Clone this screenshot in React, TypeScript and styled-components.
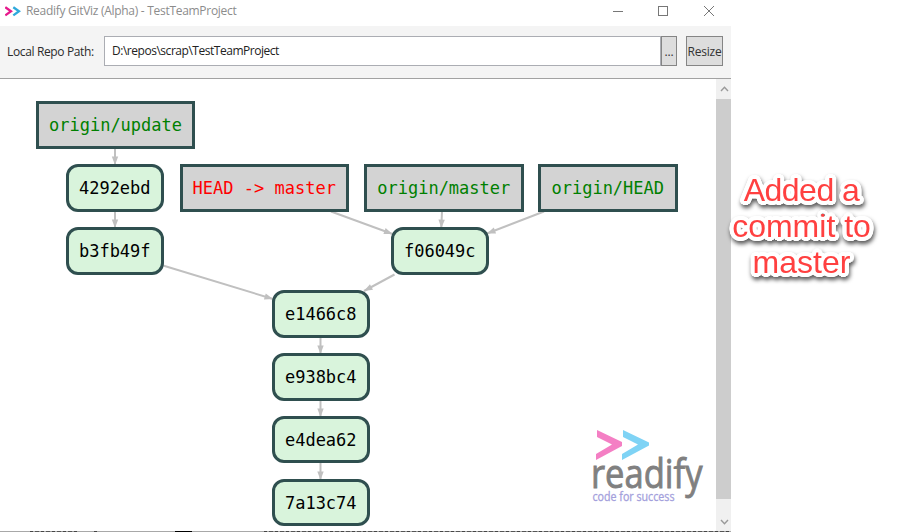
import React from "react";
import styled, { createGlobalStyle } from "styled-components";

const GlobalStyle = createGlobalStyle`
  *, *::before, *::after { box-sizing: border-box; }
  html, body { margin: 0; padding: 0; background: #fff; overflow: hidden; }
  body { font-family: "Open Sans", "Noto Sans", sans-serif; }
`;

const Page = styled.div`
  display: flex;
  width: 912px;
  height: 532px;
  overflow: hidden;
  background: #fff;
`;

const Window = styled.main`
  display: flex;
  flex-direction: column;
  width: 731px;
  flex: none;
`;

const TitleBar = styled.header`
  display: flex;
  align-items: center;
  height: 26px;
  flex: none;
  padding: 0 16px 4px 5px;
`;

const TitleText = styled.h1`
  margin: 0 auto 0 5px;
  font-size: 12px;
  line-height: 22px;
  font-weight: 400;
  letter-spacing: -0.29px;
  color: #8c8c8c;
  white-space: nowrap;
`;

const WindowControls = styled.div`
  display: flex;
  align-items: center;
  gap: 34px;
`;

const Toolbar = styled.div`
  display: flex;
  align-items: center;
  height: 53px;
  flex: none;
  padding: 0 8px 2px 7px;
  background: #f4f4f4;
  border-bottom: 1px solid #a2a2a2;
`;

const FieldLabel = styled.label`
  width: 97px;
  flex: none;
  font-size: 12px;
  letter-spacing: -0.36px;
  color: #2b2b2b;
  white-space: nowrap;
`;

const PathInput = styled.div`
  flex: 1;
  height: 30px;
  padding: 0 7px;
  border: 1px solid #abadb3;
  background: #fff;
  font-size: 12px;
  line-height: 27px;
  letter-spacing: -0.47px;
  color: #222;
  white-space: nowrap;
`;

const Button = styled.button<{ $width: number; $gap?: number }>`
  display: flex;
  align-items: center;
  justify-content: center;
  width: ${(p) => p.$width}px;
  height: 30px;
  flex: none;
  margin: 0 0 0 ${(p) => p.$gap ?? 0}px;
  padding: 0;
  border: 1px solid #858585;
  background: #dddddd;
  font-family: inherit;
  font-size: 12px;
  letter-spacing: -0.2px;
  color: #333;
`;

const Body = styled.div`
  display: flex;
  height: 452px;
  flex: none;
`;

const Canvas = styled.section`
  position: relative;
  width: 716px;
  flex: none;
  overflow: hidden;
  background: #fff;
`;

const Edges = styled.svg`
  position: absolute;
  inset: 0;
  display: block;
`;

const GraphNode = styled.div<{ $x: number; $y: number; $w: number }>`
  position: absolute;
  left: ${(p) => p.$x}px;
  top: ${(p) => p.$y}px;
  width: ${(p) => p.$w}px;
  height: 47.5px;
  display: flex;
  align-items: center;
  justify-content: center;
  padding-top: 1px;
  border: 3px solid #2f4f4f;
  font-family: "DejaVu Sans Mono", monospace;
  font-size: 17px;
  line-height: 20px;
  white-space: pre;
`;

const RefNode = styled(GraphNode)<{ $head?: boolean }>`
  background: #d3d3d3;
  color: ${(p) => (p.$head ? "#ff0000" : "#008000")};
`;

const CommitNode = styled(GraphNode)`
  background: #d9f4dc;
  border-radius: 12px;
  color: #000;
`;

const Brand = styled.svg`
  position: absolute;
  left: 590px;
  top: 347px;
  display: block;
  overflow: visible;
`;

const ScrollBar = styled.div`
  display: flex;
  flex-direction: column;
  width: 15px;
  background: #f0f0f0;
`;

const ScrollArrow = styled.div<{ $height: number }>`
  display: flex;
  align-items: center;
  justify-content: center;
  height: ${(p) => p.$height}px;
  padding-left: 2px;
`;

const ScrollThumb = styled.div`
  flex: 1;
  background: #cdcdcd;
`;

const Underlay = styled.div`
  display: flex;
  height: 1px;
  overflow: hidden;
  background: #a8a8a8;
`;

const UnderlayInk = styled.span<{ $start: number; $width: number; $solid?: boolean }>`
  flex: none;
  width: ${(p) => p.$width}px;
  height: 1px;
  margin-left: ${(p) => p.$start}px;
  background: ${(p) =>
    p.$solid ? "#000" : "repeating-linear-gradient(90deg, #444 0 3px, #aaa 3px 5px, #555 5px 9px, #999 9px 11px)"};
`;

const OUTLINE = Array.from({ length: 24 }, (_, i) => {
  const a = (i / 24) * Math.PI * 2;
  return `${(Math.cos(a) * 4).toFixed(2)}px ${(Math.sin(a) * 4).toFixed(2)}px 0 #fff`;
}).join(", ");

const Callout = styled.p`
  display: flex;
  flex-direction: column;
  align-items: center;
  width: 150px;
  height: 120px;
  flex: none;
  margin: 171.5px 0 0 -4.5px;
  font-family: "Liberation Sans", Arial, sans-serif;
  font-size: 32px;
  line-height: 36px;
  white-space: nowrap;
  color: #ff4040;
  text-shadow: ${OUTLINE};
  filter: drop-shadow(1px 3px 2px rgba(0, 0, 0, 0.65));
`;

const CalloutLine = styled.span<{ $tracking?: number }>`
  letter-spacing: ${(p) => p.$tracking ?? 0}px;
`;

type Point = [number, number];

const refs = [
  { label: "origin/update", x: 36, y: 101, w: 159 },
  { label: "HEAD -> master", x: 179.5, y: 164, w: 169.5, head: true },
  { label: "origin/master", x: 364, y: 164, w: 159.5 },
  { label: "origin/HEAD", x: 538, y: 164, w: 139.5 },
];

const commits = [
  { label: "4292ebd", x: 66, y: 164 },
  { label: "b3fb49f", x: 66, y: 227 },
  { label: "f06049c", x: 391, y: 227 },
  { label: "e1466c8", x: 272, y: 290 },
  { label: "e938bc4", x: 272, y: 353 },
  { label: "e4dea62", x: 272, y: 415.7 },
  { label: "7a13c74", x: 272, y: 478.5 },
];

const edges: [Point, Point][] = [
  [[115, 148], [115, 165]],
  [[115, 211], [115, 228]],
  [[163, 265.5], [273, 299]],
  [[331, 211.5], [392.5, 234]],
  [[442, 211], [441.3, 228]],
  [[544, 211.5], [487, 233.5]],
  [[394.5, 274.5], [364, 291]],
  [[320.5, 337], [320.5, 354]],
  [[320.5, 400], [320.5, 417]],
  [[320.5, 463], [320.5, 480]],
];

const CANVAS_TOP = 79;

const Edge = ({ from, to }: { from: Point; to: Point }) => {
  const angle = (Math.atan2(to[1] - from[1], to[0] - from[0]) * 180) / Math.PI;
  return (
    <g>
      <line x1={from[0]} y1={from[1]} x2={to[0]} y2={to[1]} stroke="#c0c0c0" strokeWidth="2" />
      <path
        d="M0 0 L-8.5 -3.2 L-8.5 3.2 Z"
        fill="#c0c0c0"
        transform={`translate(${to[0]} ${to[1]}) rotate(${angle})`}
      />
    </g>
  );
};

const AppIcon = () => (
  <svg width="16" height="12" viewBox="0 0 16 12" fill="none" strokeWidth="2.3">
    <path d="M0.3 2.2 L6 6.3 L0.3 10.4" stroke="#e6198c" />
    <path d="M8.3 2.2 L14 6.3 L8.3 10.4" stroke="#2fa9dc" />
  </svg>
);

const ReadifyLogo = () => (
  <Brand width="120" height="80" viewBox="0 0 120 80">
    <path d="M7 4 L32 16 V20 L6 34 V28 L22 18.5 L7 11 Z" fill="#f47fc4" />
    <path d="M33 4 L59 16.5 V19.5 L32 34 V28 L48 18.5 L33 11 Z" fill="#7fd3f5" />
    <text
      x="1"
      y="61.5"
      fontSize="41"
      fontFamily="Open Sans"
      fill="#808080"
      stroke="#808080"
      strokeWidth="0.9"
      textLength="111.5"
      lengthAdjust="spacingAndGlyphs"
    >
      readify
    </text>
    <text
      x="2.5"
      y="74.5"
      fontSize="12"
      fontFamily="Open Sans"
      fill="#a3a0dc"
      stroke="#a3a0dc"
      strokeWidth="0.3"
      textLength="82"
      lengthAdjust="spacingAndGlyphs"
    >
      code for success
    </text>
  </Brand>
);

export default function App() {
  return (
    <>
      <GlobalStyle />
      <Page>
        <Window>
          <TitleBar>
            <AppIcon />
            <TitleText>Readify GitViz (Alpha) - TestTeamProject</TitleText>
            <WindowControls>
              <svg width="11" height="12" viewBox="0 0 11 12">
                <path d="M0 6.5 H10" stroke="#777" />
              </svg>
              <svg width="11" height="12" viewBox="0 0 11 12">
                <rect x="0.5" y="1.5" width="9" height="9" fill="none" stroke="#777" />
              </svg>
              <svg width="12" height="12" viewBox="0 0 12 12">
                <path d="M1 1 L11 11 M11 1 L1 11" stroke="#777" />
              </svg>
            </WindowControls>
          </TitleBar>
          <Toolbar>
            <FieldLabel>Local Repo Path:</FieldLabel>
            <PathInput>D:\repos\scrap\TestTeamProject</PathInput>
            <Button $width={16}>...</Button>
            <Button $width={37} $gap={9}>Resize</Button>
          </Toolbar>
          <Body>
            <Canvas>
              <Edges width="716" height="452" viewBox={`0 ${CANVAS_TOP} 716 452`}>
                {edges.map(([from, to], i) => (
                  <Edge key={i} from={from} to={to} />
                ))}
              </Edges>
              {refs.map((r) => (
                <RefNode key={r.label} $x={r.x} $y={r.y - CANVAS_TOP} $w={r.w} $head={r.head}>
                  {r.label}
                </RefNode>
              ))}
              {commits.map((c) => (
                <CommitNode key={c.label} $x={c.x} $y={c.y - CANVAS_TOP} $w={97.5}>
                  {c.label}
                </CommitNode>
              ))}
              <ReadifyLogo />
            </Canvas>
            <ScrollBar>
              <ScrollArrow $height={20}>
                <svg width="9" height="6" viewBox="0 0 9 6" fill="none">
                  <path d="M1 5 L4.5 1.3 L8 5" stroke="#999" strokeWidth="1.4" />
                </svg>
              </ScrollArrow>
              <ScrollThumb />
              <ScrollArrow $height={32}>
                <svg width="9" height="20" viewBox="0 0 9 20" fill="none">
                  <path d="M1 15 L4.5 18.7 L8 15" stroke="#999" strokeWidth="1.4" />
                </svg>
              </ScrollArrow>
            </ScrollBar>
          </Body>
          <Underlay>
            <UnderlayInk $start={30} $width={47} />
            <UnderlayInk $start={17} $width={3} />
            <UnderlayInk $start={78} $width={17} $solid />
            <UnderlayInk $start={72} $width={467} />
          </Underlay>
        </Window>
        <Callout>
          <CalloutLine $tracking={-0.5}>Added a</CalloutLine>
          <CalloutLine>commit to</CalloutLine>
          <CalloutLine>master</CalloutLine>
        </Callout>
      </Page>
    </>
  );
}
